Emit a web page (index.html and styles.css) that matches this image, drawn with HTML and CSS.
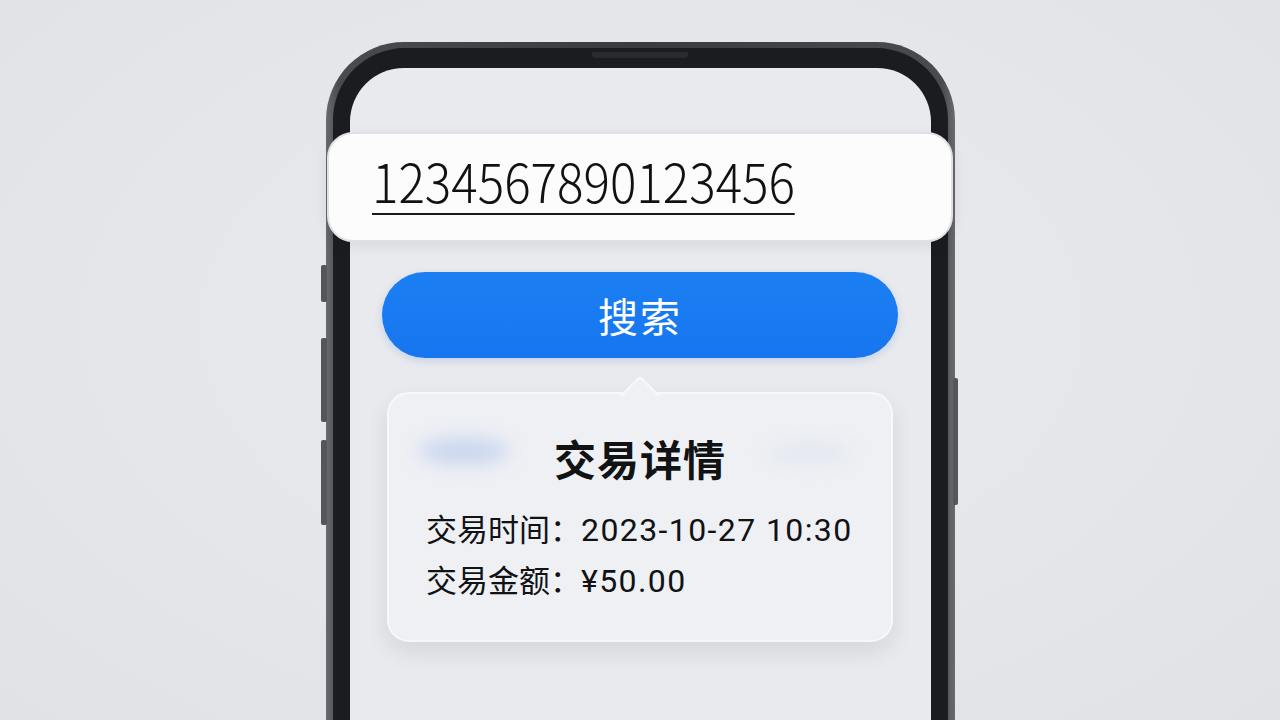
FILE: index.html
```html
<!DOCTYPE html>
<html lang="zh-CN">
<head>
<meta charset="utf-8">
<title>交易详情</title>
<link rel="stylesheet" href="styles.css">
</head>
<body>
<div class="stage">
  <div class="phone">
    <span class="side-btn left b1"></span>
    <span class="side-btn left b2"></span>
    <span class="side-btn left b3"></span>
    <span class="side-btn right b4"></span>
    <div class="bezel">
      <span class="speaker"></span>
      <div class="screen">
        <div class="field"><span class="field-text">1234567890123456</span></div>
        <button class="search-btn">搜索</button>
        <div class="card">
          <span class="arrow"></span>
          <span class="smudge s1"></span>
          <span class="smudge s2"></span>
          <h2 class="card-title">交易详情</h2>
          <p class="row">交易时间：<span class="val">2023-10-27 10:30</span></p>
          <p class="row">交易金额：<span class="val">¥50.00</span></p>
        </div>
      </div>
    </div>
  </div>
</div>
</body>
</html>
```
FILE: styles.css
```css
* { box-sizing: border-box; }
html, body { margin: 0; padding: 0; }
body {
  width: 1280px;
  height: 720px;
  overflow: hidden;
  background: radial-gradient(ellipse at 50% 45%, #eaebee 0%, #e5e6e9 60%, #e1e2e6 100%);
  font-family: "Noto Sans CJK SC", "Noto Sans", sans-serif;
  color: #111214;
}
.stage {
  display: flex;
  justify-content: center;
  padding-top: 42px;
}
.phone {
  position: relative;
  width: 629px;
  height: 780px;
  border-radius: 78px;
  padding: 6px 7px 0 7px;
  background: linear-gradient(90deg, #6a6b70 0%, #4a4b50 2%, #3a3b40 50%, #4a4b50 98%, #6a6b70 100%);
}
.side-btn {
  position: absolute;
  width: 6px;
  background: #55565b;
  border-radius: 2px;
}
.side-btn.left { left: -5px; }
.side-btn.right { right: -3px; width: 5px; }
.b1 { top: 223px; height: 37px; }
.b2 { top: 296px; height: 84px; }
.b3 { top: 398px; height: 85px; }
.b4 { top: 336px; height: 127px; }
.bezel {
  position: relative;
  height: 100%;
  background: #1b1c20;
  border-radius: 72px;
  padding: 20px 17px 0 17px;
}
.speaker {
  position: absolute;
  top: 4px;
  left: 50%;
  transform: translateX(-50%);
  width: 96px;
  height: 6px;
  border-radius: 0 0 4px 4px;
  background: #2a2b30;
}
.screen {
  height: 100%;
  background: #e9eaed;
  border-radius: 54px 54px 0 0;
  padding-top: 64px;
  display: flex;
  flex-direction: column;
  align-items: center;
}
.field {
  width: 626px;
  margin: 0 -23px;
  height: 110px;
  background: #fcfcfd;
  border: 2px solid #e0e1e5;
  border-radius: 26px;
  box-shadow: 0 4px 14px rgba(0,0,0,0.08);
  padding: 18px 0 0 43px;
}
.field-text {
  display: inline-block;
  font-family: "Noto Sans CJK SC", "Noto Sans", sans-serif;
  font-weight: 300;
  font-size: 54px;
  line-height: 56px;
  letter-spacing: 0;
  color: #111;
  padding-bottom: 5px;
  border-bottom: 2px solid #1a1a1c;
  transform: scaleX(0.915);
  transform-origin: left center;
}
.search-btn {
  margin-top: 30px;
  width: 516px;
  height: 86px;
  border: none;
  border-radius: 43px;
  background: linear-gradient(180deg, #1b7ff3 0%, #1676ef 100%);
  box-shadow: 0 3px 8px rgba(20,100,220,0.18);
  color: #fff;
  font-family: "Noto Sans CJK SC", sans-serif;
  font-size: 40px;
  font-weight: 400;
  letter-spacing: 2px;
  padding: 0;
}
.card {
  position: relative;
  margin-top: 34px;
  width: 506px;
  height: 250px;
  background: #eef0f4;
  border: 2px solid #f7f8fa;
  border-radius: 22px;
  box-shadow: 0 10px 24px rgba(0,0,0,0.09);
  padding: 38px 0 0 37px;
}
.arrow {
  position: absolute;
  top: -13px;
  left: 50%;
  width: 28px;
  height: 28px;
  margin-left: -14px;
  background: #eef0f4;
  border-top: 2px solid #f7f8fa;
  border-left: 2px solid #f7f8fa;
  transform: rotate(45deg);
  border-top-left-radius: 4px;
}
.smudge {
  position: absolute;
  border-radius: 50%;
  filter: blur(9px);
}
.s1 { left: 30px; top: 44px; width: 90px; height: 26px; background: #c9d6ee; }
.s2 { left: 380px; top: 50px; width: 80px; height: 18px; background: #e2e6ef; }
.card-title {
  position: relative;
  margin: 0 37px 18px 0;
  text-align: center;
  font-size: 42px;
  line-height: 52px;
  font-weight: 700;
  letter-spacing: 1px;
}
.row {
  position: relative;
  margin: 0;
  height: 51px;
  font-family: "Noto Sans CJK SC", sans-serif;
  font-size: 31px;
  line-height: 51px;
  font-weight: 400;
}
.val {
  font-family: "Roboto", "Noto Sans CJK SC", sans-serif;
  font-size: 32px;
  letter-spacing: 1.4px;
}
```
